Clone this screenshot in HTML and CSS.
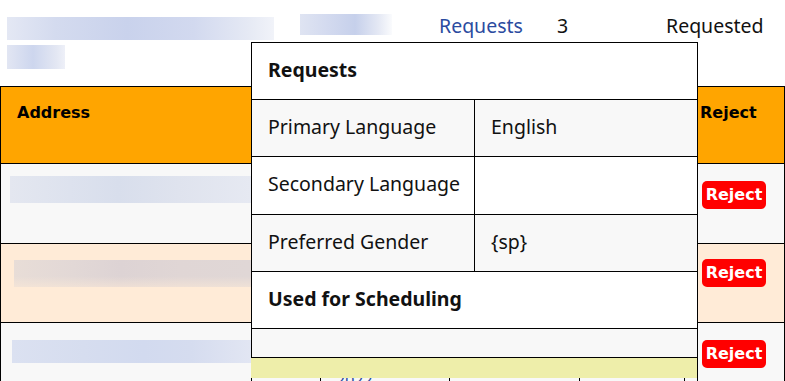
FILE: index.html
```html
<!DOCTYPE html>
<html lang="en">
<head>
<meta charset="utf-8">
<title>Requests</title>
<link rel="stylesheet" href="styles.css">
</head>
<body>
<div class="page">
  <header class="topbar">
    <div class="who">
      <div class="blur blur-name"></div>
      <div class="blur blur-sub"></div>
    </div>
    <div class="blur blur-date"></div>
    <a class="req-link" href="#">Requests</a>
    <span class="count">3</span>
    <span class="status">Requested</span>
  </header>

  <table class="grid">
    <colgroup>
      <col class="c-addr">
      <col class="c-2">
      <col class="c-3">
      <col class="c-4">
      <col class="c-5">
      <col class="c-6">
      <col class="c-rej">
    </colgroup>
    <thead>
      <tr>
        <th class="addr-h">Address</th>
        <th></th><th></th><th></th><th></th><th></th>
        <th class="rej-h">Reject</th>
      </tr>
    </thead>
    <tbody>
      <tr class="row row-1">
        <td class="addr"><div class="blur blur-addr blur-a"></div></td>
        <td></td><td></td><td></td><td></td><td></td>
        <td class="rej"><button class="reject-btn" type="button">Reject</button></td>
      </tr>
      <tr class="row row-2">
        <td class="addr"><div class="blur blur-addr blur-b"></div></td>
        <td></td><td></td><td></td><td></td><td></td>
        <td class="rej"><button class="reject-btn" type="button">Reject</button></td>
      </tr>
      <tr class="row row-3">
        <td class="addr"><div class="blur blur-addr blur-c"></div></td>
        <td></td>
        <td class="date"><span class="date-text">2022</span></td>
        <td></td><td></td><td></td>
        <td class="rej"><button class="reject-btn" type="button">Reject</button></td>
      </tr>
    </tbody>
  </table>

  <div class="popup">
    <table class="info">
      <colgroup>
        <col class="i-label">
        <col class="i-value">
      </colgroup>
      <tr class="info-title"><th colspan="2">Requests</th></tr>
      <tr class="shade"><td>Primary Language</td><td>English</td></tr>
      <tr class="tall"><td>Secondary Language</td><td></td></tr>
      <tr class="shade"><td>Preferred Gender</td><td>{sp}</td></tr>
      <tr class="info-title"><th colspan="2">Used for Scheduling</th></tr>
      <tr class="shade info-empty"><td colspan="2"></td></tr>
    </table>
  </div>
</div>
</body>
</html>
```

FILE: styles.css
```css
* { box-sizing: border-box; }

html, body {
  margin: 0;
  background: #fff;
}

body {
  font-family: "Noto Sans", "Open Sans", sans-serif;
  color: #111;
}

.page {
  position: relative;
  width: 785px;
  height: 381px;
  overflow: hidden;
}

/* ---------- top bar ---------- */
.topbar {
  display: grid;
  grid-template-columns: 300px 139px 118px 109px 1fr;
  align-items: start;
  height: 86px;
  font-size: 19.5px;
  line-height: 27px;
}

.who {
  display: flex;
  flex-direction: column;
  align-items: flex-start;
  gap: 5px;
  padding: 17px 0 0 7px;
}

.blur {
  background: linear-gradient(90deg, #e4e8f4 0%, #d4dbef 18%, #c9d2ec 45%, #d2d9ef 70%, #e5e9f4 90%, #f1f3f9 100%);
}

.blur-name { width: 267px; height: 23px; }
.blur-sub {
  width: 58px;
  height: 24px;
  background: linear-gradient(90deg, #e2e6f3, #cdd6ee 45%, #e3e7f3 85%, #eef0f8);
}
.blur-date {
  width: 92px;
  height: 21px;
  margin-top: 14px;
  background: linear-gradient(90deg, #dfe4f2, #d3daef 30%, #c6d0eb 60%, #e4e8f4 85%, #fafbfd);
}

.req-link, .count, .status { padding-top: 12px; }

.req-link {
  color: #2b4ba0;
  text-decoration: none;
}

/* ---------- main table ---------- */
.grid {
  border-collapse: collapse;
  table-layout: fixed;
  width: 784px;
  font-family: Verdana, "DejaVu Sans", sans-serif;
  font-size: 16px;
  color: #000;
}

.c-addr { width: 251px; }
.c-2 { width: 69px; }
.c-3 { width: 129px; }
.c-4 { width: 130px; }
.c-5 { width: 105px; }
.c-6 { width: 13px; }
.c-rej { width: 87px; }

.grid th,
.grid td {
  border: 1px solid #000;
  padding: 0;
  vertical-align: top;
  text-align: left;
}

.grid thead th {
  background: #ffa500;
  height: 77px;
  font-weight: bold;
  padding-top: 16px;
}

.grid .addr-h { padding-left: 16px; }
.grid .rej-h { padding-left: 2px; }

.row td { background: #f8f8f8; }
.row-1 td { height: 80px; }
.grid .row-2 td { height: 79px; background: #ffebd7; }
.row-3 td { height: 80px; }

.blur-addr { height: 27px; }
.blur-a {
  margin: 12px 0 0 9px;
  background: linear-gradient(90deg, #e4e7f0 0%, #dde2ee 25%, #d8deec 45%, #dfe3ee 70%, #e6e9f2 100%);
}
.blur-b {
  margin: 16px 0 0 13px;
  background: linear-gradient(180deg, rgba(255,255,255,0) 60%, rgba(255,235,215,0.5) 100%),
              linear-gradient(90deg, #e8ddd7 0%, #e2d8d6 25%, #ddd3d4 45%, #e0d6d5 70%, #e0d7d6 100%);
}
.blur-c {
  height: 23px;
  margin: 17px 0 0 11px;
  background: linear-gradient(90deg, #dbe1f1 0%, #d6ddef 30%, #d2daef 55%, #d5dcef 75%, #e2e6f3 100%);
}

.grid .rej { padding-left: 4px; }
.grid .row-1 .rej, .grid .row-3 .rej { padding-top: 17px; }
.grid .row-2 .rej { padding-top: 15px; }

.reject-btn {
  display: block;
  width: 64px;
  height: 28px;
  margin: 0;
  padding: 0;
  border: 0;
  border-radius: 5px;
  background: #f00;
  color: #fff;
  font: bold 16px/28px Verdana, "DejaVu Sans", sans-serif;
  text-align: center;
}

.grid .date {
  padding: 46px 0 0 15px;
  font-family: "Noto Sans", sans-serif;
  color: #2b4ba0;
}

/* ---------- popup ---------- */
.popup {
  position: absolute;
  left: 251px;
  top: 42px;
  width: 446px;
  padding-bottom: 20px;
  background: #eeeeaa;
}

.info {
  width: 446px;
  border-collapse: collapse;
  table-layout: fixed;
  background: #fff;
  font-size: 19.5px;
  line-height: 27px;
  color: #111;
}

.i-label { width: 223px; }
.i-value { width: 223px; }

.info th,
.info td {
  border: 1px solid #000;
  height: 57px;
  padding: 13px 8px 0 16px;
  text-align: left;
  vertical-align: top;
  white-space: nowrap;
}

.info th { font-weight: bold; }

.info .shade td { background: #f8f8f8; }

.info .tall td { height: 58px; }

.info .info-empty td { height: 29px; padding: 0; }
```
